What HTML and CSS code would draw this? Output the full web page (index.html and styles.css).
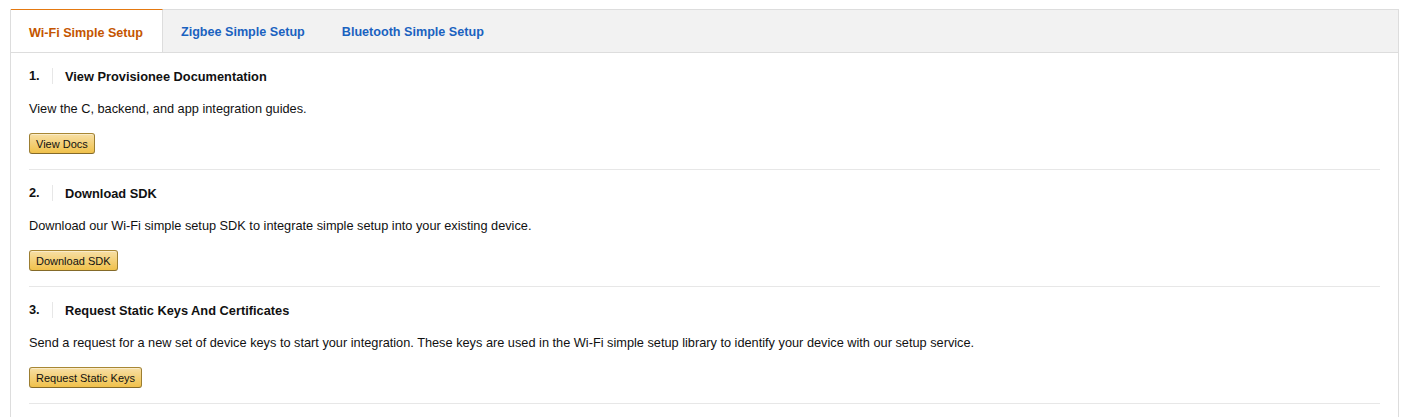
FILE: index.html
```html
<!DOCTYPE html>
<html>
<head>
<meta charset="utf-8">
<link rel="stylesheet" href="styles.css">
</head>
<body>
<div class="panel">
  <div class="tabs">
    <div class="tab active">Wi-Fi Simple Setup</div>
    <div class="tab">Zigbee Simple Setup</div>
    <div class="tab">Bluetooth Simple Setup</div>
  </div>
  <div class="content">
    <div class="step">
      <div class="step-head"><span class="num">1.</span><span class="title">View Provisionee Documentation</span></div>
      <p class="desc">View the C, backend, and app integration guides.</p>
      <button class="btn">View Docs</button>
    </div>
    <div class="step">
      <div class="step-head"><span class="num">2.</span><span class="title">Download SDK</span></div>
      <p class="desc">Download our Wi-Fi simple setup SDK to integrate simple setup into your existing device.</p>
      <button class="btn">Download SDK</button>
    </div>
    <div class="step">
      <div class="step-head"><span class="num">3.</span><span class="title">Request Static Keys And Certificates</span></div>
      <p class="desc">Send a request for a new set of device keys to start your integration. These keys are used in the Wi-Fi simple setup library to identify your device with our setup service.</p>
      <button class="btn">Request Static Keys</button>
    </div>
  </div>
</div>
</body>
</html>
```
FILE: styles.css
```css
html, body {
  margin: 0;
  padding: 0;
  background: #fff;
}
body {
  padding: 9px 0 0 10px;
  font-family: "Liberation Sans", Arial, sans-serif;
  font-size: 12.75px;
  color: #111;
}
.panel {
  width: 1389px;
  height: 420px;
  border: 1px solid #ddd;
  border-bottom: none;
  box-sizing: border-box;
}
.tabs {
  display: flex;
  height: 42px;
  background: #f2f2f2;
  border-bottom: 1px solid #ddd;
}
.tab {
  display: flex;
  align-items: center;
  padding: 2px 18px 0 18px;
  font-weight: bold;
  font-size: 12.6px;
  color: #1a62c0;
  border-right: 1px solid transparent;
}
.tab.active {
  background: #fff;
  color: #c45500;
  border-right: 1px solid #ddd;
  margin-top: -1px;
  border-top: 1px solid #e47911;
  height: 43px;
  padding: 3px 19px 0 18px;
  box-sizing: border-box;
}
.content {
  padding: 0 18px 0 18px;
}
.step {
  padding: 13px 0 15px 0;
  border-bottom: 1px solid #e7e7e7;
}
.step-head {
  display: flex;
  align-items: center;
  height: 20px;
  font-weight: bold;
  font-size: 12.8px;
}
.num {
  width: 11px;
  padding-right: 12px;
  border-right: 1px solid #e7e7e7;
  line-height: 16px;
}
.title {
  padding-left: 12px;
}
.desc {
  margin: 14px 0 0 0;
  line-height: 18px;
}
.btn {
  display: block;
  margin-top: 15px;
  height: 21px;
  padding: 0 6px;
  font-family: inherit;
  font-size: 11px;
  color: #111;
  background: linear-gradient(to bottom, #f7dfa5, #f0c14b);
  border: 1px solid;
  border-color: #a88734 #9c7e31 #846a29;
  border-radius: 3px;
  box-shadow: inset 0 1px 0 rgba(255,255,255,0.4);
}
```
